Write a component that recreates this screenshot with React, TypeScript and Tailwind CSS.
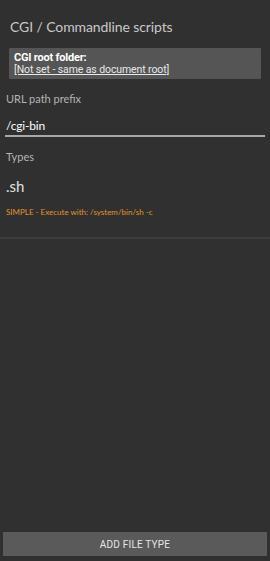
import React from 'react';

const hand = { fontFamily: 'Lato, "Open Sans", sans-serif' };

const App: React.FC = () => {
  return (
    <div className="w-[270px] h-[561px] bg-[#303030] flex flex-col overflow-hidden" style={hand}>
      <div className="flex-1 flex flex-col">
        <h1 className="mt-[17px] ml-[10px] text-[14px] leading-[20px] tracking-[-0.1px] text-[#c8c8c8]">
          CGI / Commandline scripts
        </h1>
        <div
          className="mt-[11px] mx-[9px] bg-[#555555] rounded-[1px] px-[5px] pt-[4px] pb-[3px] text-[11px] leading-[12px] text-white"
          style={{ fontFamily: 'Roboto, "Liberation Sans", sans-serif' }}
        >
          <div className="font-bold tracking-[-0.2px]">CGI root folder:</div>
          <div className="underline text-[10.5px] tracking-[-0.1px] text-[#e8e8e8]">[Not set - same as document root]</div>
        </div>
        <div className="mt-[12px] ml-[6px] text-[11px] leading-[16px] text-[#b4b4b4]">URL path prefix</div>
        <div className="mt-[11px] mx-[5px] border-b-2 border-[#a8a8a8] pb-[1px] pl-[1px] text-[12px] leading-[16px] tracking-[-0.2px] text-white">
          /cgi-bin
        </div>
        <div className="mt-[12px] ml-[6px] text-[11px] leading-[16px] text-[#b4b4b4]">Types</div>
        <div className="mt-[11px] ml-[6px] text-[15px] leading-[20px] text-[#e0e0e0]">.sh</div>
        <div className="mt-[10px] ml-[6px] text-[8px] leading-[12px] text-[#e0952a]">
          SIMPLE - Execute with: /system/bin/sh -c
        </div>
        <div className="mt-[19px] h-[2px] bg-[#3c3c3c]" />
      </div>
      <button
        className="mx-[3px] mb-[5px] h-[24px] bg-[#5a5a5a] text-[10px] text-[#e6e6e6] tracking-[0.2px]"
        style={{ fontFamily: 'Roboto, "Liberation Sans", sans-serif' }}
      >
        ADD FILE TYPE
      </button>
    </div>
  );
};

export default App;
